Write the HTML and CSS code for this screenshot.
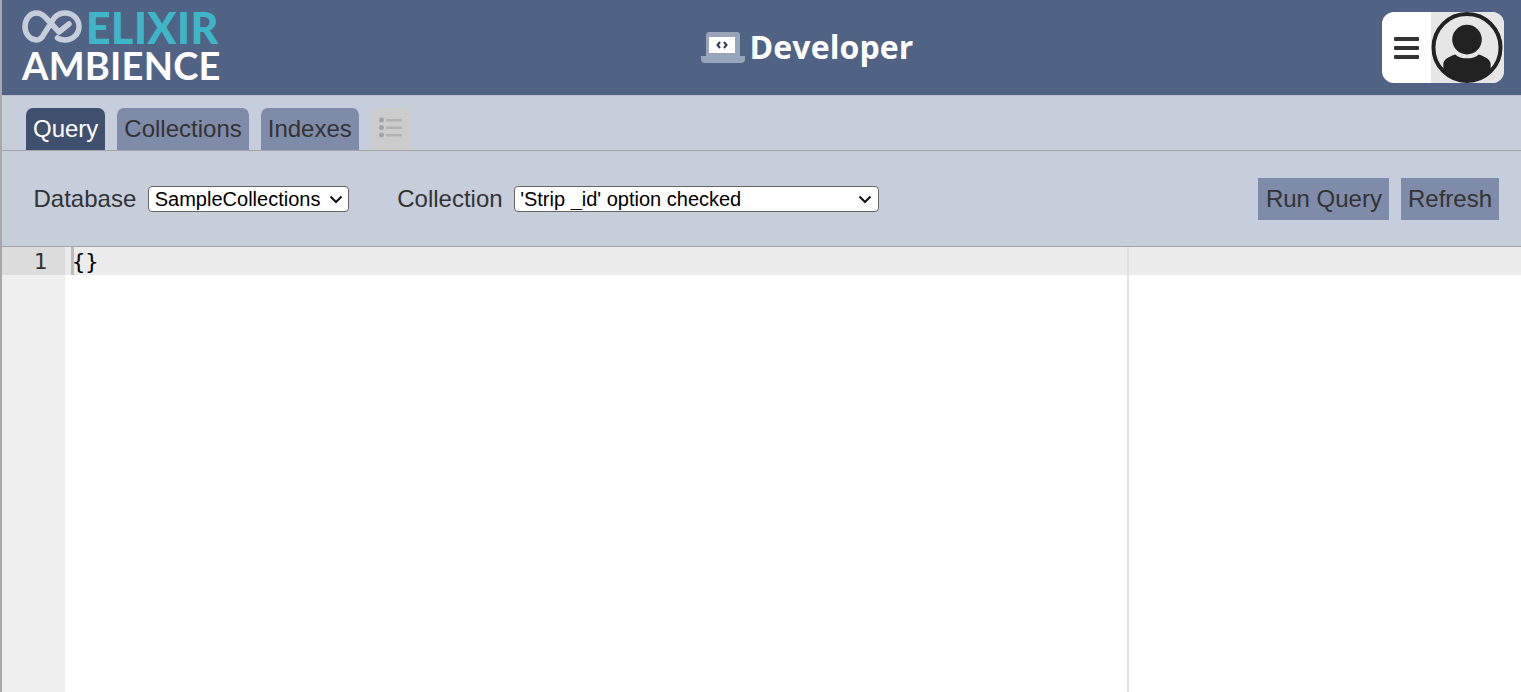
FILE: index.html
```html
<!DOCTYPE html>
<html lang="en">
<head>
<meta charset="utf-8">
<title>Developer</title>
<link rel="stylesheet" href="styles.css">
</head>
<body>
<div class="app">
  <header class="header">
    <div class="logo">
      <svg class="logo-mark" viewBox="0 0 60 34" width="60" height="34">
        <path d="M35.500 28 C37.500 29.500 40.500 30 43 30 C51 30 57 24 57 16.500 C57 9 51 3 43 3 C38 3 35 5 32.500 7.500 L22 24 C20 28 17 30 14.500 30 C8 30 3 24 3 16.500 C3 9 8 3 14.500 3 C18 3 21 5 23 7 L37 22 L47 14" fill="none" stroke="#c6cddb" stroke-width="5.500" stroke-linecap="round" stroke-linejoin="round"/>
      </svg>
      <div class="logo-elixir">ELIXIR</div>
      <div class="logo-ambience">AMBIENCE</div>
    </div>
    <div class="title">
      <svg class="title-icon" viewBox="0 0 44 32" width="44" height="32">
        <path d="M5 3 Q5 0 8 0 H36 Q39 0 39 3 V25 H5 Z" fill="#98a4b9"/>
        <rect x="8" y="5" width="26" height="16" fill="#fff"/>
        <path d="M0 24 H44 V27 Q44 31 40 31 H4 Q0 31 0 27 Z" fill="#98a4b9"/>
        <path d="M19 10 L16.500 13 L19 16 M23 10 L25.500 13 L23 16" fill="none" stroke="#2f3c55" stroke-width="2"/>
      </svg>
      <span class="title-text">Developer</span>
    </div>
    <div class="menu">
      <div class="menu-burger"><span class="bar"></span><span class="bar"></span><span class="bar"></span></div>
      <div class="menu-avatar">
        <svg viewBox="0 0 72 72" width="72" height="71">
          <defs><clipPath id="disc"><circle cx="36" cy="36" r="33"/></clipPath></defs>
          <circle cx="36" cy="36" r="34" fill="none" stroke="#222" stroke-width="4"/>
          <circle cx="36" cy="28" r="15" fill="#222"/>
          <path clip-path="url(#disc)" d="M12 72 V53 C12 48 18 45 24 43 C27 46 31 47 36 47 C41 47 45 46 48 43 C54 45 60 48 60 53 V72 Z" fill="#222"/>
        </svg>
      </div>
    </div>
  </header>

  <nav class="tabs">
    <div class="tab tab-active">Query</div>
    <div class="tab">Collections</div>
    <div class="tab">Indexes</div>
    <div class="tab-list">
      <svg viewBox="0 0 38 42" width="38" height="42">
        <circle cx="10.500" cy="12" r="2.500" fill="#a3a3a3"/><circle cx="10.500" cy="19.500" r="2.500" fill="#a3a3a3"/><circle cx="10.500" cy="27" r="2.500" fill="#a3a3a3"/>
        <rect x="15" y="11" width="16" height="2.500" rx="1" fill="#b2b2b2"/><rect x="15" y="18.500" width="16" height="2.500" rx="1" fill="#b2b2b2"/><rect x="15" y="26" width="16" height="2.500" rx="1" fill="#b2b2b2"/>
      </svg>
    </div>
  </nav>

  <section class="toolbar">
    <label class="field field-db">Database
      <span class="select-wrap">
        <select class="select select-db"><option>SampleCollections</option></select>
        <svg class="chevron" viewBox="0 0 14 9" width="14" height="9"><path d="M1.500 1.500 L7 7 L12.500 1.500" fill="none" stroke="#111" stroke-width="2"/></svg>
      </span>
    </label>
    <label class="field field-coll">Collection
      <span class="select-wrap">
        <select class="select select-coll"><option>'Strip _id' option checked</option></select>
        <svg class="chevron" viewBox="0 0 14 9" width="14" height="9"><path d="M1.500 1.500 L7 7 L12.500 1.500" fill="none" stroke="#111" stroke-width="2"/></svg>
      </span>
    </label>
    <div class="actions">
      <button class="btn btn-run" type="button">Run Query</button>
      <button class="btn" type="button">Refresh</button>
    </div>
  </section>

  <section class="editor">
    <div class="gutter"><div class="gutter-cell">1</div></div>
    <div class="code">
      <div class="active-line"><span class="cursor"></span>{}</div>
      <div class="print-margin"></div>
    </div>
  </section>
</div>
</body>
</html>
```

FILE: styles.css
```css
* { box-sizing: border-box; }
html, body { margin: 0; height: 100%; overflow: hidden; }
body { font-family: "Liberation Sans", Arial, sans-serif; background: #fff; color: #333; }

.app { height: 692px; border-left: 2px solid #a9a9a9; display: flex; flex-direction: column; }

.header { height: 95px; flex: none; background: #506385; display: flex; align-items: center; padding: 0 17px 0 20px; justify-content: space-between; }
.logo { position: relative; width: 200px; height: 95px; padding-top: 10px; font-family: Lato, "Liberation Sans", sans-serif; font-weight: 900; }
.logo-mark { position: absolute; left: 0; top: 10px; }
.logo-elixir { margin-left: 64px; font-size: 43px; line-height: 36px; color: #3fb5c8; letter-spacing: 0.4px; }
.logo-ambience { margin-top: 2px; font-size: 38px; line-height: 34px; font-weight: 700; color: #fff; white-space: nowrap; letter-spacing: 0.25px; }

.title { display: flex; align-items: center; gap: 5px; margin-left: 10px; }
.title-text { font-family: "Open Sans", sans-serif; font-weight: 700; font-size: 32px; color: #fff; line-height: 40px; padding-bottom: 2px; letter-spacing: 0.1px; }

.menu { width: 122px; height: 71px; border-radius: 12px; overflow: hidden; display: flex; background: #fff; }
.menu-burger { width: 49px; display: flex; flex-direction: column; gap: 5px; padding-left: 12px; justify-content: center; }
.bar { display: block; width: 25px; height: 4px; background: #333; border-radius: 1px; }
.menu-avatar { width: 73px; background: #e6e6e6; }
.menu-avatar svg { display: block; }

.tabs { height: 56px; flex: none; background: #c6cddb; border-top: 1px solid #b9bfcb; border-bottom: 1px solid #a3a3a3; display: flex; align-items: flex-end; gap: 12px; padding-left: 24px; }
.tab { height: 42px; line-height: 42px; padding: 0 7px; font-size: 24px; background: #7f8ca9; color: #333; border-radius: 7px 7px 0 0; }
.tab-active { background: #3f4f6e; color: #fff; }
.tab-list { height: 42px; width: 38px; background: #cccccc; }
.tab-list svg { display: block; }

.toolbar { height: 96px; flex: none; background: #c6cddb; border-bottom: 1px solid #a3a3a3; display: flex; align-items: center; padding: 0 22px 0 31.500px; }
.field { font-size: 24px; color: #333; display: flex; align-items: center; gap: 12px; }
.field-db { margin-right: 48px; }
.field-coll { gap: 11px; }
.select-wrap { position: relative; display: block; height: 26px; }
.select { display: block; appearance: none; height: 26px; font-family: "Liberation Sans", Arial, sans-serif; font-size: 20px; color: #000; background: #fff; border: 1px solid #666; border-radius: 4px; padding: 0 0 0 5.500px; }
.select-db { width: 201px; }
.select-coll { width: 365px; }
.chevron { position: absolute; right: 6.500px; top: 9px; pointer-events: none; }
.actions { margin-left: auto; display: flex; gap: 12px; }
.btn { height: 42px; padding: 0 7px; border: 0; background: #7f8ca9; color: #333; font-family: inherit; font-size: 24px; }
.btn-run { padding-left: 8px; }

.editor { flex: 1; display: flex; min-height: 0; }
.gutter { width: 63px; flex: none; background: #efefef; }
.gutter-cell { height: 28px; line-height: 30px; background: #dcdcdc; color: #333; text-align: right; padding-right: 18px; font-family: "DejaVu Sans Mono", monospace; font-size: 22px; }
.code { flex: 1; position: relative; background: #fff; }
.active-line { height: 28px; line-height: 30px; background: #ececec; padding-left: 7px; color: #000; font-family: "DejaVu Sans Mono", monospace; font-size: 22px; position: relative; }
.cursor { position: absolute; left: 6px; top: 0; width: 3px; height: 28px; background: #bcbcbc; }
.print-margin { position: absolute; left: 1062px; top: 0; bottom: 0; width: 2px; background: #e2e2e2; }
```
